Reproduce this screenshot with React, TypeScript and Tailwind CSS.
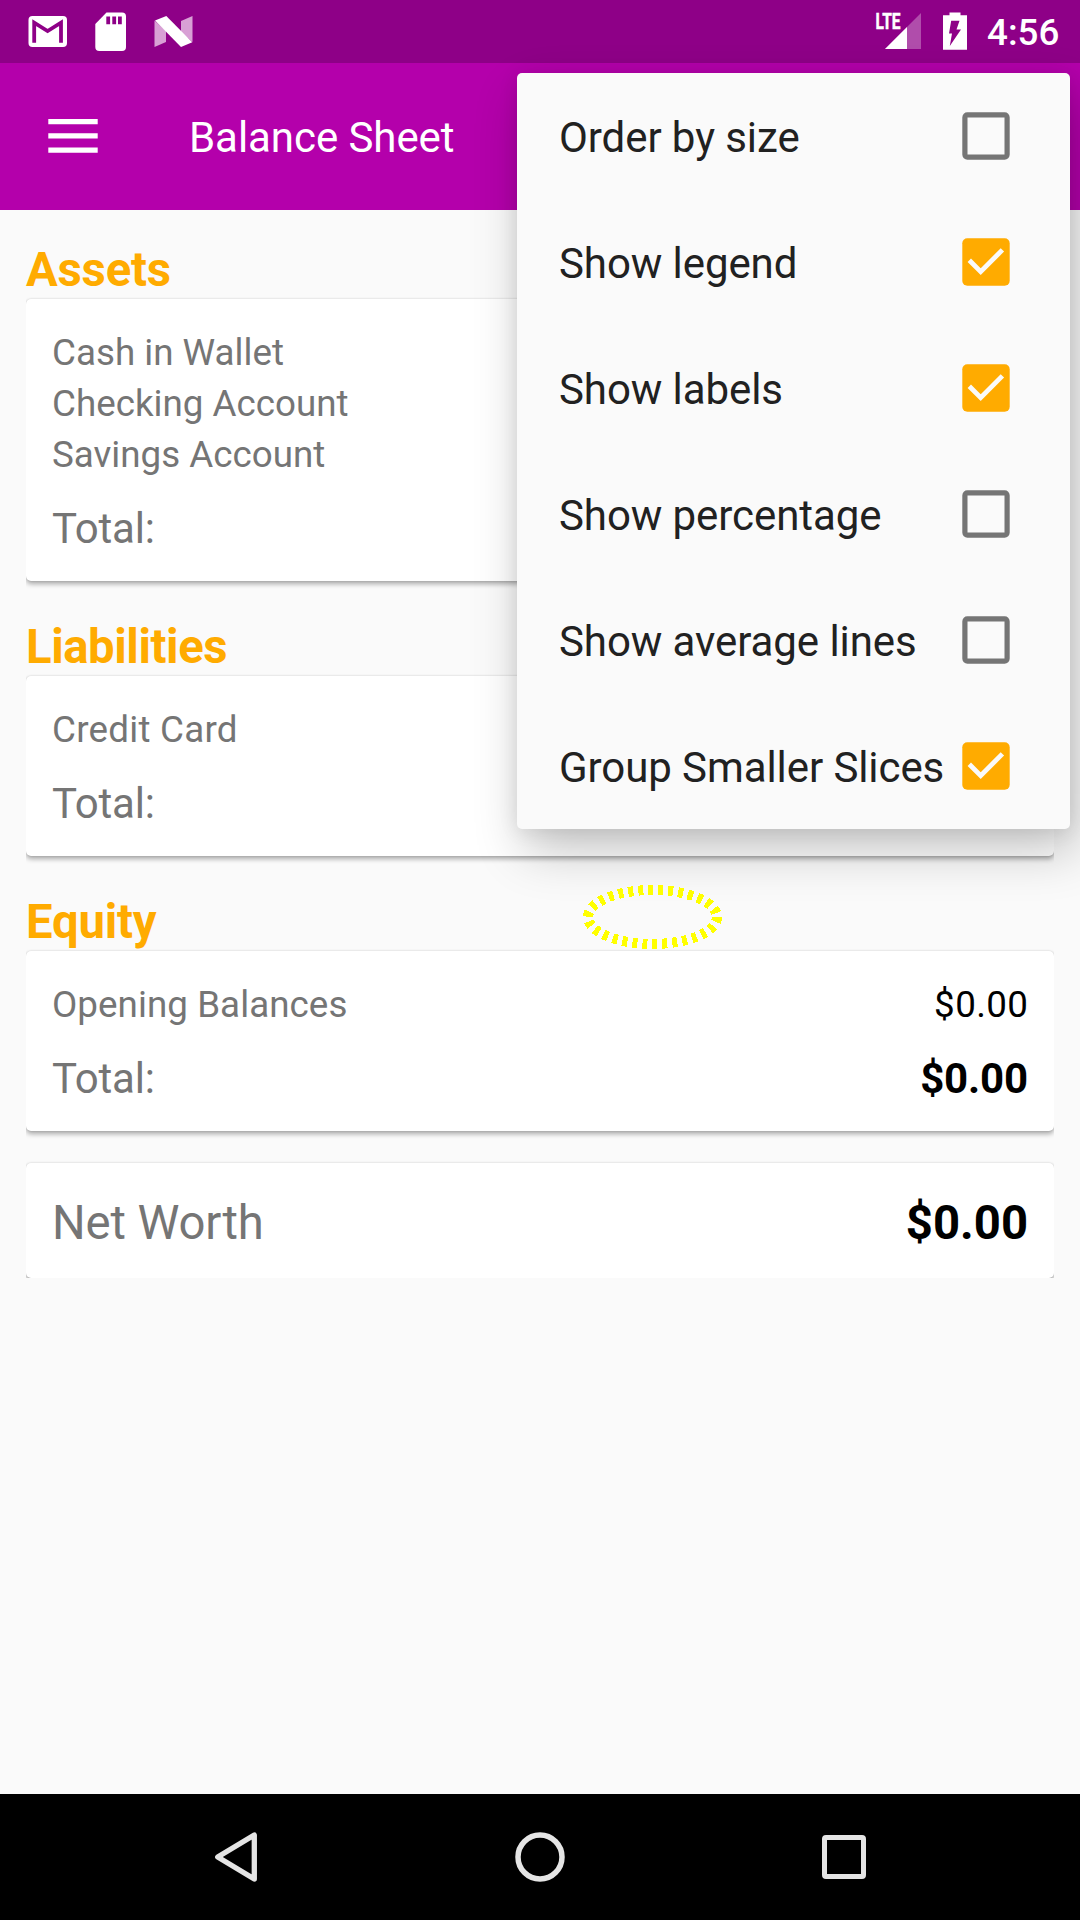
import React from "react";

type Item = { label: string; checked: boolean };

const MENU: Item[] = [
  { label: "Order by size", checked: false },
  { label: "Show legend", checked: true },
  { label: "Show labels", checked: true },
  { label: "Show percentage", checked: false },
  { label: "Show average lines", checked: false },
  { label: "Group Smaller Slices", checked: true },
];

function StatusBar() {
  return (
    <div className="flex h-[63px] shrink-0 items-start bg-[#8e0087]">
      <svg width="220" height="63" viewBox="0 0 220 63" className="shrink-0">
        <rect x="28.5" y="16" width="38.5" height="31" rx="4" fill="#fff" />
        <path d="M34.2 42.7V22.6L47.6 31L61 22.6V42.7" fill="none" stroke="#8e0087" strokeWidth="3.8" />
        <path d="M106.500 12.500H122a4 4 0 0 1 4 4V47a4 4 0 0 1-4 4H99.300a4 4 0 0 1-4-4V24Z" fill="#fff" />
        <path d="M106.300 16.500h3.800v7.700h-3.800zM112.300 16.500h3.800v7.700h-3.800zM118 16.500h3.800v7.700H118z" fill="#8e0087" />
        <path d="M154.500 20.500L166 31V42L154.500 47Z" fill="#d8a0d5" />
        <path d="M192.500 16V42L181 32V21Z" fill="#d8a0d5" />
        <path d="M155 20.500L166.300 16L192.300 42.300L181 47Z" fill="#fff" />
      </svg>
      <div className="grow" />
      <svg width="117" height="63" viewBox="870 0 117 63" className="shrink-0">
        <text x="875.500" y="29" fill="#fff" stroke="#fff" strokeWidth="0.500" fontFamily="Roboto" fontWeight="700" fontSize="21.500" textLength="25" lengthAdjust="spacingAndGlyphs">LTE</text>
        <path d="M921 13V49H885Z" fill="#b04dab" />
        <path d="M907 27V49H885Z" fill="#fff" />
        <path d="M949.500 12.500h11v2.800h6.500V49.700h-24V15.300h6.500Z" fill="#fff" />
        <path d="M951.200 20.800H959.500L956.500 29.500H961L949.800 46L952 33.500H949Z" fill="#8e0087" />
      </svg>
      <span className="mt-[9px] mr-[21px] w-[72px] whitespace-nowrap text-right text-[36.75px] leading-[48px] font-medium text-white">4:56</span>
    </div>
  );
}

function AppBar() {
  return (
    <div className="flex h-[147px] shrink-0 items-center bg-[#b400ab] pl-[48px]">
      <svg width="50" height="36" viewBox="0 0 50 36" className="mb-[2px] shrink-0">
        <path d="M0.300 1h49.400v5.300H0.300zM0.300 15.300h49.400v5.300H0.300zM0.300 29.500h49.400v5.300H0.300z" fill="#fff" />
      </svg>
      <h1 className="mt-[3px] ml-[91px] text-[42px] leading-[50px] tracking-[-0.06px] text-white">Balance Sheet</h1>
    </div>
  );
}

/* The clip wrapper keeps the card's shadow from showing at its left and right. */
function Card({ children, flat }: { children: React.ReactNode; flat?: boolean }) {
  return (
    <div className={flat ? "[clip-path:inset(-2px_0_0_0)]" : "[clip-path:inset(-2px_0_-12px_0)]"}>
      <div className="rounded-[5px] bg-white px-[26px] shadow-[0_3px_5px_rgba(0,0,0,0.32),0_0_2px_rgba(0,0,0,0.16)]">{children}</div>
    </div>
  );
}

type Row = { name: string; amount?: string; tracking?: string };

function Section({ title, tracking, rows, total }: { title: string; tracking: string; rows: Row[]; total?: string }) {
  return (
    <section>
      <h2 className={`text-[47.25px] leading-[57px] font-bold text-[#ffab00] ${tracking}`}>{title}</h2>
      <Card>
        <div className="pt-[28px] pb-[24px]">
          {rows.map((r) => (
            <div key={r.name} className="flex justify-between text-[36.75px] leading-[51px]">
              <span className={`text-[#757575] ${r.tracking ?? ""}`}>{r.name}</span>
              {r.amount && <span className="mr-[-0.4px] tracking-[0.4px] text-black">{r.amount}</span>}
            </div>
          ))}
          <div className="mt-[20px] flex justify-between text-[42px] leading-[57px]">
            <span className="tracking-[-0.2px] text-[#757575]">Total:</span>
            {total && <span className="font-bold tracking-[-0.15px] text-black">{total}</span>}
          </div>
        </div>
      </Card>
    </section>
  );
}

function Checkbox({ checked }: { checked: boolean }) {
  return (
    <svg width="48" height="48" viewBox="0 0 48 48" className="shrink-0">
      {checked ? (
        <>
          <rect x="0.300" y="0.300" width="47.400" height="47.400" rx="5" fill="#ffab00" />
          <path d="M7.300 22.200L18.700 33.600L40.400 11.900" fill="none" stroke="#fafafa" strokeWidth="4.800" />
        </>
      ) : (
        <rect x="2.900" y="2.900" width="42.200" height="42.200" rx="2.500" fill="none" stroke="#757575" strokeWidth="5.200" />
      )}
    </svg>
  );
}

function OptionsMenu() {
  return (
    <div className="absolute top-[73px] left-[517px] w-[553px] rounded-[5px] bg-[#fafafa] shadow-[7px_22px_50px_rgba(0,0,0,0.23),0_2px_20px_rgba(0,0,0,0.09)]">
      {MENU.map((m) => (
        <div key={m.label} className="flex h-[126px] items-center justify-between pr-[60px] pl-[42px]">
          <span className="mt-[4px] whitespace-nowrap text-[42px] leading-[50px] tracking-[-0.08px] text-[#212121]">{m.label}</span>
          <Checkbox checked={m.checked} />
        </div>
      ))}
    </div>
  );
}

function NavBar() {
  return (
    <div className="flex h-[126px] shrink-0 items-center justify-between bg-black px-[211px]">
      <svg width="50" height="54" viewBox="211 1830 50 54" fill="none" stroke="#e5e5e5" strokeWidth="5.300" strokeLinejoin="round">
        <path d="M254.300 1835V1879L217.700 1857Z" />
      </svg>
      <svg width="54" height="54" viewBox="513 1830 54 54" fill="none" stroke="#e5e5e5" strokeWidth="5.500">
        <circle cx="540" cy="1857" r="22" />
      </svg>
      <svg width="50" height="54" viewBox="819 1830 50 54" fill="none" stroke="#e5e5e5" strokeWidth="5">
        <rect x="824.500" y="1837.500" width="39" height="39" rx="1.500" />
      </svg>
    </div>
  );
}

export default function App() {
  return (
    <div className="relative flex h-[1920px] w-[1080px] flex-col overflow-hidden bg-[#fafafa] font-[Roboto,sans-serif]">
      <StatusBar />
      <AppBar />
      <main className="flex grow flex-col gap-[38px] px-[26px] pt-[32px]">
        <Section title="Assets" tracking="tracking-[-0.2px]" rows={[{ name: "Cash in Wallet" }, { name: "Checking Account" }, { name: "Savings Account" }]} />
        <Section title="Liabilities" tracking="tracking-[-0.42px]" rows={[{ name: "Credit Card", tracking: "tracking-[0.25px]" }]} />
        <div className="flex flex-col gap-[32px]">
          <Section title="Equity" tracking="tracking-[-0.2px]" rows={[{ name: "Opening Balances", amount: "$0.00", tracking: "tracking-[0.06px]" }]} total="$0.00" />
          <Card flat>
            <div className="flex h-[115px] items-center justify-between pt-[6px] text-[47.25px] leading-[57px]">
              <span className="tracking-[-0.12px] text-[#757575]">Net Worth</span>
              <span className="font-bold text-black">$0.00</span>
            </div>
          </Card>
        </div>
      </main>
      <NavBar />
      <OptionsMenu />
      <svg className="absolute top-[880px] left-[578px]" width="150" height="74" viewBox="578 880 150 74" shapeRendering="crispEdges">
        <ellipse cx="652.500" cy="917" rx="64.500" ry="27" fill="none" stroke="#ffff00" strokeWidth="10" strokeDasharray="5 5" />
      </svg>
    </div>
  );
}
